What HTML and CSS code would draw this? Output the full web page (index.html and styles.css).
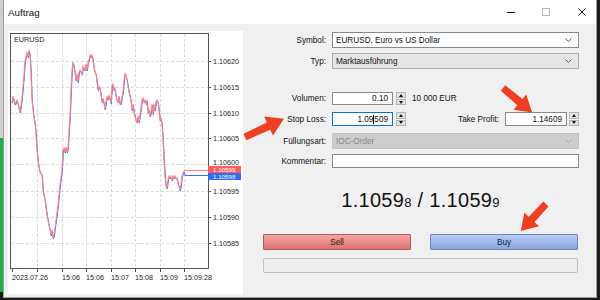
FILE: index.html
```html
<!DOCTYPE html>
<html>
<head>
    <title>Auftrag</title>
    <link rel="stylesheet" href="styles.css">
</head>
<body>

<div class="edge"></div>

<div class="window">
    <div class="titlebar">
        <span class="title">Auftrag</span>
        <div class="controls">
            <span class="ctl-min"></span>
            <span class="ctl-max"></span>
            <svg class="ctl-close" width="8" height="8" viewBox="0 0 8 8">
                <path d="M0.5 0.5 L7.5 7.5 M7.5 0.5 L0.5 7.5" stroke="#111" stroke-width="1"/>
            </svg>
        </div>
    </div>

    <div class="content">
        <div class="chart">
            <svg width="235" height="263" viewBox="8 31 235 263">
                <defs>
                    <polyline id="tick" fill="none" points="12,102 13,96 15,104 17,100 19,108 20,112 22,98 24,75 25,60 26,57 27,52 28,57 29,50 30,55 31,75 32,100 33,110 34,118 35,123 36,135 37,150 38,160 39,168 40,172 42,175 43,190 45,200 47,215 49,225 51,235 52,230 53,238 54,235 56,220 58,205 60,185 62,170 63,150 64,148 65,152 66,147 67,152 68,148 69,130 70,115 71,90 72,70 73,62 74,66 75,72 76,80 77,74 78,82 79,72 80,70 82,74 83,66 85,70 86,64 87,70 88,62 89,60 90,55 91,57 92,55 93,60 94,68 95,72 96,74 97,82 98,90 99,86 100,88 101,95 102,102 103,98 104,104 105,109 106,102 107,96 108,99 109,95 110,99 111,103 112,86 113,84 114,90 115,88 116,96 117,100 118,102 119,96 120,104 121,103 122,97 123,92 124,80 125,73 126,76 127,80 128,86 129,92 130,96 131,100 132,110 133,104 134,112 135,116 136,120 137,122 138,116 139,122 140,114 141,108 142,100 143,98 144,102 145,100 146,104 147,100 148,112 149,110 150,116 151,112 152,104 153,114 154,104 155,110 156,102 157,100 158,102 159,110 160,120 161,118 162,124 163,140 164,160 165,176 166,186 167,188 168,180 169,176 170,178 171,176 172,180 173,176 174,178 175,176 176,178 177,178 178,183 179,186 180,190 181,185 182,176 183,173 184,171"/>
                </defs>

                <g class="grid">
                    <line x1="11" y1="61.5" x2="208" y2="61.5"/>
                    <line x1="11" y1="87.5" x2="208" y2="87.5"/>
                    <line x1="11" y1="113.5" x2="208" y2="113.5"/>
                    <line x1="11" y1="138.5" x2="208" y2="138.5"/>
                    <line x1="11" y1="164.5" x2="208" y2="164.5"/>
                    <line x1="11" y1="191.5" x2="208" y2="191.5"/>
                    <line x1="11" y1="217.5" x2="208" y2="217.5"/>
                    <line x1="11" y1="243.5" x2="208" y2="243.5"/>
                    <line x1="37.5" y1="34" x2="37.5" y2="268"/>
                    <line x1="62.5" y1="34" x2="62.5" y2="268"/>
                    <line x1="86.5" y1="34" x2="86.5" y2="268"/>
                    <line x1="111.5" y1="34" x2="111.5" y2="268"/>
                    <line x1="135.5" y1="34" x2="135.5" y2="268"/>
                    <line x1="160.5" y1="34" x2="160.5" y2="268"/>
                    <line x1="184.5" y1="34" x2="184.5" y2="268"/>
                </g>

                <use href="#tick" class="bid" transform="translate(0.4,1)"/>
                <polyline class="bid" fill="none" points="184,172 185,175.5 208,175.5"/>
                <use href="#tick" class="ask"/>
                <line class="ask" x1="184" y1="170.5" x2="208" y2="170.5"/>

                <rect class="frame" x="10.5" y="33.5" width="198" height="235"/>

                <g class="ticks">
                    <line x1="208" y1="61.5" x2="211" y2="61.5"/>
                    <line x1="208" y1="87.5" x2="211" y2="87.5"/>
                    <line x1="208" y1="113.5" x2="211" y2="113.5"/>
                    <line x1="208" y1="138.5" x2="211" y2="138.5"/>
                    <line x1="208" y1="191.5" x2="211" y2="191.5"/>
                    <line x1="208" y1="217.5" x2="211" y2="217.5"/>
                    <line x1="208" y1="243.5" x2="211" y2="243.5"/>
                    <line x1="12.5" y1="268" x2="12.5" y2="272"/>
                    <line x1="37.5" y1="268" x2="37.5" y2="272"/>
                    <line x1="62.5" y1="268" x2="62.5" y2="272"/>
                    <line x1="86.5" y1="268" x2="86.5" y2="272"/>
                    <line x1="111.5" y1="268" x2="111.5" y2="272"/>
                    <line x1="135.5" y1="268" x2="135.5" y2="272"/>
                    <line x1="160.5" y1="268" x2="160.5" y2="272"/>
                    <line x1="184.5" y1="268" x2="184.5" y2="272"/>
                </g>

                <g class="axis">
                    <text x="14" y="42">EURUSD</text>
                    <text x="213" y="64">1.10620</text>
                    <text x="213" y="90">1.10615</text>
                    <text x="213" y="116">1.10610</text>
                    <text x="213" y="141">1.10605</text>
                    <text x="213" y="164.5">1.10600</text>
                    <text x="213" y="194">1.10595</text>
                    <text x="213" y="220">1.10590</text>
                    <text x="213" y="246">1.10585</text>
                    <text x="12" y="280">2023.07.26</text>
                    <text x="62" y="280">15:06</text>
                    <text x="86" y="280">15:06</text>
                    <text x="111" y="280">15:07</text>
                    <text x="135" y="280">15:08</text>
                    <text x="160" y="280">15:09</text>
                    <text x="184" y="280">15:09:28</text>
                </g>

                <rect x="208" y="166" width="33" height="7" fill="#ff5c5c"/>
                <rect x="208" y="173" width="33" height="7" fill="#2f6df5"/>
                <g class="axis light">
                    <text x="213" y="171.9">1.10599</text>
                    <text x="213" y="178.9">1.10598</text>
                </g>
            </svg>
        </div>

        <div class="form">
            <div class="row r1">
                <label>Symbol:</label>
                <div class="field select">
                    <span>EURUSD, Euro vs US Dollar</span>
                    <svg width="7" height="4" viewBox="0 0 7 4"><polyline points="0.5,0.5 3.5,3.5 6.5,0.5" fill="none" stroke="#555"/></svg>
                </div>
            </div>
            <div class="row r2">
                <label>Typ:</label>
                <div class="field select grey">
                    <span>Marktausführung</span>
                    <svg width="7" height="4" viewBox="0 0 7 4"><polyline points="0.5,0.5 3.5,3.5 6.5,0.5" fill="none" stroke="#666"/></svg>
                </div>
            </div>
            <div class="row r3">
                <label>Volumen:</label>
                <div class="field num">0.10</div>
                <div class="spin"><span class="up"></span><span class="down"></span></div>
                <span class="unit">10 000 EUR</span>
            </div>
            <div class="row r4">
                <label>Stop Loss:</label>
                <div class="field num focus">1.09<i class="caret"></i>509</div>
                <div class="spin"><span class="up"></span><span class="down"></span></div>
                <label class="tp">Take Profit:</label>
                <div class="field num short">1.14609</div>
                <div class="spin tight"><span class="up"></span><span class="down"></span></div>
            </div>
            <div class="row r5">
                <label>Füllungsart:</label>
                <div class="field select off">
                    <span>IOC-Order</span>
                    <svg width="7" height="4" viewBox="0 0 7 4"><polyline points="0.5,0.5 3.5,3.5 6.5,0.5" fill="none" stroke="#aaa"/></svg>
                </div>
            </div>
            <div class="row r6">
                <label>Kommentar:</label>
                <div class="field"></div>
            </div>

            <div class="price">1.1059<small>8</small> / 1.1059<small>9</small></div>

            <div class="actions">
                <button class="sell">Sell</button>
                <button class="buy">Buy</button>
            </div>
            <div class="progress"></div>
        </div>
    </div>
</div>

<svg class="arrows" width="600" height="300" viewBox="0 0 600 300">
    <polygon transform="translate(245,137) rotate(-25)" points="0,-3.5 26,-4 26,-10.5 43,0 26,10.5 26,4 0,3.5"/>
    <polygon transform="translate(503,88) rotate(40)" points="0,-3.5 22,-4 22,-10 38,0 22,10 22,4 0,3.5"/>
    <polygon transform="translate(546,204) rotate(133)" points="0,-3.5 21,-4 21,-10 37,0 21,10 21,4 0,3.5"/>
</svg>

</body>
</html>
```

FILE: styles.css
```css
* {
    box-sizing: border-box;
}
body {
    margin: 0;
    width: 600px;
    height: 300px;
    overflow: hidden;
    position: relative;
    display: flex;
    align-items: flex-start;
    background-color: #1c1c1c;
    font-family: "Liberation Sans", Arial, sans-serif;
    color: #111;
}
.edge {
    width: 3px;
    height: 300px;
    background: linear-gradient(#cfcfcf 0, #cfcfcf 138px, #19b24b 138px, #19b24b 292px, #1c1c1c 292px);
}
.window {
    width: 594px;
    height: 298px;
    background-color: #f0f0f0;
    border: 1px solid #9c9c9c;
    border-top: none;
    display: flex;
    flex-direction: column;
}
.titlebar {
    height: 24px;
    background-color: #fff;
    display: flex;
    align-items: center;
    padding: 0 10px 0 4px;
}
.title {
    flex: 1;
    font-size: 9.8px;
}
.controls {
    display: flex;
    align-items: center;
}
.ctl-min {
    width: 8px;
    height: 1px;
    background-color: #111;
    margin-right: 27px;
}
.ctl-max {
    width: 8px;
    height: 8px;
    border: 1px solid #b8b8b8;
    margin-right: 28px;
}
.ctl-close {
    display: block;
}
.content {
    display: flex;
    gap: 5px;
    padding: 7px 0 0 4px;
}
.chart {
    width: 235px;
    height: 263px;
    background-color: #fff;
}
.chart svg {
    display: block;
}
.grid line {
    stroke: #d9d9d9;
    stroke-width: 1;
    stroke-dasharray: 3 2;
}
.ticks line {
    stroke: #555;
    stroke-width: 1;
}
.frame {
    fill: none;
    stroke: #555;
    stroke-width: 1;
}
.ask {
    stroke: #ff8585;
    stroke-width: 1.1;
}
.bid {
    stroke: #3f6cff;
    stroke-width: 1;
}
.axis text {
    font-size: 7.2px;
    fill: #222;
}
.axis.light text {
    font-size: 6.2px;
    fill: #fff;
}
.form {
    width: 331px;
    display: flex;
    flex-direction: column;
}
.row {
    display: flex;
    align-items: center;
}
.row label {
    width: 78px;
    margin-right: 6px;
    text-align: right;
    font-size: 8.2px;
}
.r1 { margin-top: 1px; height: 16px; }
.r2 { margin-top: 5px; height: 16px; }
.r3 { margin-top: 23px; height: 13px; }
.r4 { margin-top: 7px; height: 14px; }
.r5 { margin-top: 7px; height: 16px; }
.r6 { margin-top: 5px; height: 14px; }
.field {
    flex: 1;
    height: 100%;
    background-color: #fff;
    border: 1px solid #8a8a8a;
    font-size: 8.2px;
    display: flex;
    align-items: center;
    padding: 0 3px;
}
.select span {
    flex: 1;
}
.select svg {
    margin-right: 3px;
}
.select.grey {
    background-color: #e5e5e5;
    border-color: #adadad;
}
.select.off {
    background-color: #cccccc;
    border-color: #c4c4c4;
    color: #858585;
}
.num {
    flex: none;
    width: 61px;
    justify-content: flex-end;
    padding-right: 4px;
}
.num.short {
    width: 62px;
}
.focus {
    border-color: #0078d7;
}
.caret {
    display: inline-block;
    width: 1px;
    height: 9px;
    background-color: #000;
}
.spin {
    width: 10px;
    height: 100%;
    margin-left: 3px;
    display: flex;
    flex-direction: column;
    gap: 1px;
}
.spin.tight {
    margin-left: 2px;
}
.spin span {
    flex: 1;
    display: flex;
    align-items: center;
    justify-content: center;
    border: 1px solid #b4b4b4;
    background-color: #e4e4e4;
}
.up::after {
    content: "";
    border-left: 2.5px solid transparent;
    border-right: 2.5px solid transparent;
    border-bottom: 3px solid #111;
}
.down::after {
    content: "";
    border-left: 2.5px solid transparent;
    border-right: 2.5px solid transparent;
    border-top: 3px solid #111;
}
.unit {
    margin-left: 6px;
    font-size: 8.2px;
}
.row label.tp {
    flex: 1;
    width: auto;
}
.price {
    margin: 20px 0 0 15px;
    width: 315px;
    height: 24px;
    line-height: 24px;
    text-align: center;
    font-size: 20px;
    letter-spacing: 0.3px;
    color: #111;
}
.price small {
    font-size: 13px;
}
.actions {
    margin: 22px 0 0 15px;
    width: 315px;
    display: flex;
    justify-content: space-between;
}
.actions button {
    width: 148px;
    height: 16px;
    padding: 0;
    font-family: inherit;
    font-size: 8.2px;
    border-radius: 1px;
}
.sell {
    background: linear-gradient(#f5a3a3, #d97474);
    border: 1px solid #b65a5a;
    color: #3d1414;
}
.buy {
    background: linear-gradient(#b6cbf6, #8aa3da);
    border: 1px solid #6d87c1;
    color: #172244;
}
.progress {
    margin: 8px 0 0 15px;
    width: 315px;
    height: 15px;
    border: 1px solid #c2c2c2;
    border-radius: 2px;
    background-color: #ededed;
}
.arrows {
    position: absolute;
    left: 0;
    top: 0;
    pointer-events: none;
}
.arrows polygon {
    fill: #ef3f22;
}
```
